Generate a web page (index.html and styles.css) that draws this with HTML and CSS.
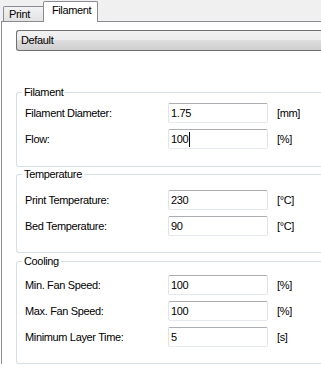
FILE: index.html
```html
<!DOCTYPE html>
<html lang="en">
<head>
  <meta charset="UTF-8">
  <title>Filament settings</title>
  <link rel="stylesheet" href="styles.css">
</head>
<body>
  <div class="tabbar">
    <div class="tab">Print</div>
    <div class="tab tab-active">Filament</div>
  </div>

  <div class="pane">
    <div class="combo">Default</div>

    <div class="group group-filament">
      <span class="legend">Filament</span>
      <div class="row"><span class="label">Filament Diameter:</span><span class="field">1.75</span><span class="unit">[mm]</span></div>
      <div class="row"><span class="label">Flow:</span><span class="field">100<span class="caret"></span></span><span class="unit">[%]</span></div>
    </div>

    <div class="group group-temp">
      <span class="legend">Temperature</span>
      <div class="row"><span class="label">Print Temperature:</span><span class="field">230</span><span class="unit">[°C]</span></div>
      <div class="row"><span class="label">Bed Temperature:</span><span class="field">90</span><span class="unit">[°C]</span></div>
    </div>

    <div class="group group-cooling">
      <span class="legend">Cooling</span>
      <div class="row"><span class="label">Min. Fan Speed:</span><span class="field">100</span><span class="unit">[%]</span></div>
      <div class="row"><span class="label">Max. Fan Speed:</span><span class="field">100</span><span class="unit">[%]</span></div>
      <div class="row"><span class="label">Minimum Layer Time:</span><span class="field">5</span><span class="unit">[s]</span></div>
    </div>
  </div>
</body>
</html>
```

FILE: styles.css
```css
body { margin: 0; overflow: hidden; background: #fff; color: #000; font-family: "Liberation Sans", Arial, sans-serif; font-size: 11px; letter-spacing: -0.35px; }

.tabbar { height: 21px; background: #f0f0f0; display: flex; align-items: flex-end; padding-left: 3px; }
.tab { box-sizing: border-box; height: 15px; line-height: 14px; padding: 0 14px 0 5px; border: 1px solid #898c95; border-bottom: none; border-radius: 2px 2px 0 0; background: linear-gradient(#f3f3f3, #e2e2e2); }
.tab-active { position: relative; z-index: 1; height: 21px; width: 55px; margin-left: -2px; margin-bottom: -1px; padding: 1px 0 0 8px; background: #fff; }

.pane { margin-left: 1px; border-left: 1px solid #898c95; border-top: 1px solid #898c95; padding: 8px 0 0 14px; }

.combo { box-sizing: border-box; height: 21px; line-height: 19px; padding-left: 4px; border: 1px solid #707070; border-right: none; border-radius: 3px 0 0 3px; background: linear-gradient(#f2f2f2 0%, #ebebeb 50%, #dddddd 50%, #cfcfcf 100%); }

.group { position: relative; border: 1px solid #d5dfe5; border-right: none; border-radius: 3px 0 0 3px; padding-left: 8px; }
.group-filament { margin-top: 41px; padding-top: 10px; padding-bottom: 17px; }
.group-temp { margin-top: 7px; padding-top: 15px; padding-bottom: 16px; }
.group-cooling { margin-top: 8px; padding-top: 13px; padding-bottom: 16px; }
.legend { position: absolute; top: -7px; left: 5px; padding: 0 2px; background: #fff; line-height: 13px; }

.row { display: flex; align-items: center; height: 20px; }
.row + .row { margin-top: 6px; }
.label { width: 143px; line-height: 20px; }
.field { box-sizing: border-box; width: 100px; height: 20px; line-height: 18px; padding-left: 2px; border: 1px solid #e2e3ea; border-top-color: #abadb3; border-bottom-color: #e3e9ef; border-radius: 2px; display: flex; align-items: center; }
.caret { display: inline-block; width: 1px; height: 15px; background: #000; margin-left: 1px; }
.unit { margin-left: 9px; line-height: 20px; }
```
